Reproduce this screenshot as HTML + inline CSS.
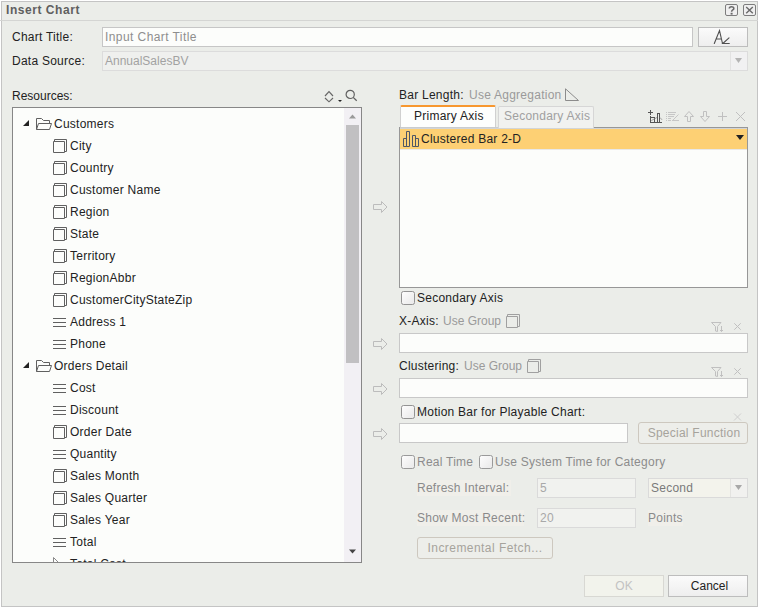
<!DOCTYPE html>
<html><head><meta charset="utf-8">
<style>
*{box-sizing:border-box;margin:0;padding:0}
html,body{width:759px;height:608px;overflow:hidden;background:#fff}
body{position:relative;font-family:"Liberation Sans",sans-serif;font-size:12px;color:#222}
.a{position:absolute}
.t{position:absolute;white-space:nowrap;line-height:14px;height:14px;letter-spacing:0.25px}
.g{color:#9a9a9a}
.box{position:absolute;border:1px solid #c8c8c8;background:#fcfdfb}
.dis{position:absolute;border:1px solid #dcdcdc;background:#eff0ee}
.btn{position:absolute;border:1px solid #bdbdbd;background:linear-gradient(#fbfbfb,#eeeeee);text-align:center;line-height:19px}
.cb{position:absolute;width:14px;height:14px;border:1px solid #939393;border-radius:2.5px;background:linear-gradient(135deg,#fdfdfd,#e9e9e9)}
svg{position:absolute;overflow:visible}
.dbtn{color:#a6a39c;background:#edeeea;border-color:#cdc8bf;border-radius:3px;line-height:20px}
.lb{height:16px;line-height:16px;background:#f0efea;color:#8a8a8a}
</style></head>
<body>
<!-- dialog frame -->
<div class="a" style="left:1px;top:1px;width:757px;height:606px;background:#ebede9;border:1px solid #c4c4c4"></div>
<div class="a" style="left:0;top:20px;width:758px;height:1px;background:#d4d5d3"></div>
<div class="t" style="left:6px;top:3px;font-weight:bold;color:#5f5f5f;font-size:12px;letter-spacing:0.55px">Insert Chart</div>

<!-- help/close -->
<div class="a" style="left:725px;top:4px;width:13px;height:12px;border:1px solid #7d7d7d;border-radius:2px;background:#efefef"></div>
<svg style="left:725px;top:4px" width="13" height="12"><path d="M4.3 4.6 C4.3 2.2 8.8 2.2 8.8 4.4 C8.8 6 6.6 6 6.6 7.8" stroke="#6a6a6a" stroke-width="1.6" fill="none"/><rect x="5.6" y="8.8" width="2" height="1.8" fill="#6a6a6a"/></svg>
<div class="a" style="left:743px;top:4px;width:13px;height:12px;border:1px solid #7d7d7d;border-radius:2px;background:#efefef"></div>
<svg style="left:743px;top:4px" width="13" height="12"><path d="M3.2 3 L9.8 9.2 M9.8 3 L3.2 9.2" stroke="#6a6a6a" stroke-width="1.4"/></svg>

<!-- Chart title -->
<div class="t" style="left:12px;top:30px">Chart Title:</div>
<div class="box" style="left:102px;top:27px;width:591px;height:20px;border-color:#c6c6c6"></div>
<div class="t g" style="left:105px;top:30px;letter-spacing:0.42px;color:#8e8e8e">Input Chart Title</div>
<div class="btn" style="left:698px;top:27px;width:50px;height:20px"></div>
<svg style="left:698px;top:27px" width="50" height="20"><path d="M16.3 16.5 L21.5 3.6 L24.5 16.5 M18 12 H23.3 M31 10.8 L24.8 16.5 H31.3" stroke="#505050" stroke-width="1.1" fill="none" stroke-linecap="round"/></svg>

<!-- Data Source -->
<div class="t" style="left:12px;top:54px">Data Source:</div>
<div class="dis" style="left:102px;top:51px;width:646px;height:20px"></div>
<div class="a" style="left:730px;top:52px;width:1px;height:18px;background:#e2e2e2"></div>
<div class="t g" style="left:105px;top:54px;color:#a2a2a2;letter-spacing:0">AnnualSalesBV</div>
<div class="a" style="left:731px;top:52px;width:16px;height:18px;background:#f1f1f2"></div><svg style="left:735px;top:58px" width="8" height="6"><path d="M0 0 L7 0 L3.5 5 Z" fill="#b4b4b4"/></svg>

<!-- Resources -->
<div class="t" style="left:12px;top:89px;letter-spacing:0">Resources:</div>
<svg style="left:324px;top:91px" width="20" height="12"><path d="M1 5 L5 0.6 L9 5 M1 7 L5 10.8 L9 7" stroke="#666" stroke-width="1.15" fill="none"/><path d="M14 9 L18 9 L16 11 Z" fill="#222"/></svg>
<svg style="left:345px;top:89px" width="14" height="14"><circle cx="5.2" cy="5.4" r="4.1" stroke="#606060" stroke-width="1.2" fill="none"/><path d="M8.2 8.4 L11.7 11.8" stroke="#606060" stroke-width="1.3"/></svg>

<div class="box" style="left:12px;top:107px;width:350px;height:456px;border-color:#878787;background:#fcfdfb"></div>
<div class="a" style="left:344px;top:108px;width:17px;height:454px;background:#f2f0f4"></div>
<div class="a" style="left:346px;top:125px;width:13px;height:238px;background:#c1c0c2"></div>
<svg style="left:349px;top:114px" width="8" height="5"><path d="M0 4.5 L7 4.5 L3.5 0.5Z" fill="#9a9a9a"/></svg>
<svg style="left:349px;top:549px" width="8" height="5"><path d="M0 0.5 L7 0.5 L3.5 4.5Z" fill="#444"/></svg>

<div class="a" style="left:13px;top:108px;width:331px;height:454px;overflow:hidden">
<svg style="left:10px;top:12px" width="7" height="6"><path d="M0 6 L6 6 L6 0 Z" fill="#222"/></svg>
<svg style="left:22px;top:9px" width="18" height="14"><path d="M1.5 12.5 V1.5 H6.5 L8.5 3.5 H14.5 V6.5 M1.5 12.5 L3.5 6.5 H16.5 L14.5 12.5 Z" stroke="#606060" fill="none"/></svg>
<div class="t" style="left:41px;top:9px">Customers</div>
<svg style="left:40px;top:31px" width="14" height="14"><path d="M0.5 2.5 H11.5 V13.5 H0.5 Z M1.5 2.5 V0.5 H13.5 V12.5 H11.5" stroke="#606060" fill="none"/></svg>
<div class="t" style="left:57px;top:31px">City</div>
<svg style="left:40px;top:53px" width="14" height="14"><path d="M0.5 2.5 H11.5 V13.5 H0.5 Z M1.5 2.5 V0.5 H13.5 V12.5 H11.5" stroke="#606060" fill="none"/></svg>
<div class="t" style="left:57px;top:53px">Country</div>
<svg style="left:40px;top:75px" width="14" height="14"><path d="M0.5 2.5 H11.5 V13.5 H0.5 Z M1.5 2.5 V0.5 H13.5 V12.5 H11.5" stroke="#606060" fill="none"/></svg>
<div class="t" style="left:57px;top:75px">Customer Name</div>
<svg style="left:40px;top:97px" width="14" height="14"><path d="M0.5 2.5 H11.5 V13.5 H0.5 Z M1.5 2.5 V0.5 H13.5 V12.5 H11.5" stroke="#606060" fill="none"/></svg>
<div class="t" style="left:57px;top:97px">Region</div>
<svg style="left:40px;top:119px" width="14" height="14"><path d="M0.5 2.5 H11.5 V13.5 H0.5 Z M1.5 2.5 V0.5 H13.5 V12.5 H11.5" stroke="#606060" fill="none"/></svg>
<div class="t" style="left:57px;top:119px">State</div>
<svg style="left:40px;top:141px" width="14" height="14"><path d="M0.5 2.5 H11.5 V13.5 H0.5 Z M1.5 2.5 V0.5 H13.5 V12.5 H11.5" stroke="#606060" fill="none"/></svg>
<div class="t" style="left:57px;top:141px">Territory</div>
<svg style="left:40px;top:163px" width="14" height="14"><path d="M0.5 2.5 H11.5 V13.5 H0.5 Z M1.5 2.5 V0.5 H13.5 V12.5 H11.5" stroke="#606060" fill="none"/></svg>
<div class="t" style="left:57px;top:163px">RegionAbbr</div>
<svg style="left:40px;top:185px" width="14" height="14"><path d="M0.5 2.5 H11.5 V13.5 H0.5 Z M1.5 2.5 V0.5 H13.5 V12.5 H11.5" stroke="#606060" fill="none"/></svg>
<div class="t" style="left:57px;top:185px">CustomerCityStateZip</div>
<svg style="left:40px;top:210px" width="14" height="10"><path d="M0 0.5 H13 M0 4.5 H13 M0 8.5 H13" stroke="#606060" fill="none"/></svg>
<div class="t" style="left:57px;top:207px">Address 1</div>
<svg style="left:40px;top:232px" width="14" height="10"><path d="M0 0.5 H13 M0 4.5 H13 M0 8.5 H13" stroke="#606060" fill="none"/></svg>
<div class="t" style="left:57px;top:229px">Phone</div>
<svg style="left:10px;top:254px" width="7" height="6"><path d="M0 6 L6 6 L6 0 Z" fill="#222"/></svg>
<svg style="left:22px;top:251px" width="18" height="14"><path d="M1.5 12.5 V1.5 H6.5 L8.5 3.5 H14.5 V6.5 M1.5 12.5 L3.5 6.5 H16.5 L14.5 12.5 Z" stroke="#606060" fill="none"/></svg>
<div class="t" style="left:41px;top:251px">Orders Detail</div>
<svg style="left:40px;top:276px" width="14" height="10"><path d="M0 0.5 H13 M0 4.5 H13 M0 8.5 H13" stroke="#606060" fill="none"/></svg>
<div class="t" style="left:57px;top:273px">Cost</div>
<svg style="left:40px;top:298px" width="14" height="10"><path d="M0 0.5 H13 M0 4.5 H13 M0 8.5 H13" stroke="#606060" fill="none"/></svg>
<div class="t" style="left:57px;top:295px">Discount</div>
<svg style="left:40px;top:317px" width="14" height="14"><path d="M0.5 2.5 H11.5 V13.5 H0.5 Z M1.5 2.5 V0.5 H13.5 V12.5 H11.5" stroke="#606060" fill="none"/></svg>
<div class="t" style="left:57px;top:317px">Order Date</div>
<svg style="left:40px;top:342px" width="14" height="10"><path d="M0 0.5 H13 M0 4.5 H13 M0 8.5 H13" stroke="#606060" fill="none"/></svg>
<div class="t" style="left:57px;top:339px">Quantity</div>
<svg style="left:40px;top:361px" width="14" height="14"><path d="M0.5 2.5 H11.5 V13.5 H0.5 Z M1.5 2.5 V0.5 H13.5 V12.5 H11.5" stroke="#606060" fill="none"/></svg>
<div class="t" style="left:57px;top:361px">Sales Month</div>
<svg style="left:40px;top:383px" width="14" height="14"><path d="M0.5 2.5 H11.5 V13.5 H0.5 Z M1.5 2.5 V0.5 H13.5 V12.5 H11.5" stroke="#606060" fill="none"/></svg>
<div class="t" style="left:57px;top:383px">Sales Quarter</div>
<svg style="left:40px;top:405px" width="14" height="14"><path d="M0.5 2.5 H11.5 V13.5 H0.5 Z M1.5 2.5 V0.5 H13.5 V12.5 H11.5" stroke="#606060" fill="none"/></svg>
<div class="t" style="left:57px;top:405px">Sales Year</div>
<svg style="left:40px;top:430px" width="14" height="10"><path d="M0 0.5 H13 M0 4.5 H13 M0 8.5 H13" stroke="#606060" fill="none"/></svg>
<div class="t" style="left:57px;top:427px">Total</div>
<svg style="left:40px;top:449px" width="14" height="14"><path d="M0.5 0.5 L8 8 L0.5 8 Z" stroke="#888" fill="none"/></svg>
<div class="t" style="left:57px;top:449px">Total Cost</div>
</div>

<!-- right side -->
<div class="t" style="left:399px;top:88px">Bar Length:</div>
<div class="t g" style="left:469px;top:88px">Use Aggregation</div>
<svg style="left:565px;top:88px" width="16" height="14"><path d="M0.5 0.8 L0.5 12.5 L13.5 12.5 Z" stroke="#8c8c8c" fill="none"/></svg>

<!-- tabs -->
<div class="box" style="left:399px;top:127px;width:349px;height:161px;border-color:#979797"></div>
<div class="a" style="left:400px;top:127px;width:194px;height:1px;background:#c9ccd0"></div>
<div class="a" style="left:498px;top:106px;width:96px;height:22px;border:1px solid #d6d6d6;border-bottom:none;border-radius:2px 2px 0 0;background:#f1f2f0"></div>
<div class="t g" style="left:504px;top:109px;color:#a0a0a0">Secondary Axis</div>
<div class="a" style="left:400px;top:105px;width:96px;height:22px;background:#fdfefd;border:1px solid #d0d0d0;border-top:2px solid #f7972f;border-bottom:none;border-radius:2px 2px 0 0"></div>
<div class="t" style="left:414px;top:109px">Primary Axis</div>
<div class="a" style="left:400px;top:128px;width:347px;height:22px;background:#fdd074;border-top:1px solid #d3d5d6;border-bottom:1px solid #e8e8e8"></div>
<div class="t" style="left:421px;top:132px">Clustered Bar 2-D</div>
<svg style="left:402px;top:130px" width="18" height="18"><path d="M1.5 16.5 V8.5 H4.5 V16.5 Z M4.5 16.5 V1.5 H7.5 V16.5 Z M10.5 16.5 V5.5 H13.5 V16.5 Z M13.5 16.5 V8.5 H16.5 V16.5 Z" stroke="#4e5666" fill="none"/></svg>
<svg style="left:736px;top:135px" width="9" height="6"><path d="M0 0 L8 0 L4 5 Z" fill="#222"/></svg>

<!-- toolbar icons -->
<svg style="left:644px;top:106px" width="110" height="20">
<g stroke="#555" fill="none" shape-rendering="crispEdges">
<path d="M4 6.5 H9 M6.5 4 V9 M6.5 10 V17 M6 16.5 H18 M6.5 11.5 H10.5 V16.5 M13.5 16.5 V7.5 H15.5 V16.5"/>
</g>
<path d="M7.3 14.6 L13 11.5 M16 11.5 L18 13.8" stroke="#8a8a8a" stroke-width="0.8" fill="none"/>
<g stroke="#c6c6c6" fill="none" shape-rendering="crispEdges">
<path d="M22 6.5 H23 M22 8.5 H23 M22 10.5 H23 M22 12.5 H23 M22 14.5 H23 M24 6.5 H32 M24 8.5 H31 M24 10.5 H30 M24 12.5 H27 M24 14.5 H27 M28 14.5 H35"/>
</g>
<path d="M34.5 8.5 L28.5 14.5" stroke="#c6c6c6" fill="none"/>
<g stroke="#c0c0c0" fill="none">
<path d="M43.5 15.5 V10.5 H40.5 L45 5.5 L49.5 10.5 H46.5 V15.5 Z"/>
<path d="M59.5 5.5 V10.5 H56.5 L61 15.5 L65.5 10.5 H62.5 V5.5 Z"/>
<path d="M78.5 6 V15 M74 10.5 H83" shape-rendering="crispEdges"/>
<path d="M92 6 L101 15 M101 6 L92 15"/>
</g></svg>

<!-- arrows -->
<svg style="left:372px;top:201px" width="18" height="12"><path d="M1.5 3.5 H9.5 V0.5 L15 6 L9.5 11.5 V8.5 H1.5 Z" stroke="#bcbcbc" fill="none"/></svg>
<svg style="left:372px;top:338px" width="18" height="12"><path d="M1.5 3.5 H9.5 V0.5 L15 6 L9.5 11.5 V8.5 H1.5 Z" stroke="#bcbcbc" fill="none"/></svg>
<svg style="left:372px;top:383px" width="18" height="12"><path d="M1.5 3.5 H9.5 V0.5 L15 6 L9.5 11.5 V8.5 H1.5 Z" stroke="#bcbcbc" fill="none"/></svg>
<svg style="left:372px;top:428px" width="18" height="12"><path d="M1.5 3.5 H9.5 V0.5 L15 6 L9.5 11.5 V8.5 H1.5 Z" stroke="#bcbcbc" fill="none"/></svg>

<div class="cb" style="left:401px;top:291px"></div>
<div class="t" style="left:417px;top:291px">Secondary Axis</div>

<div class="t" style="left:399px;top:314px">X-Axis:</div>
<div class="t g" style="left:443px;top:314px;letter-spacing:0">Use Group</div>
<svg style="left:506px;top:314px" width="15" height="14"><path d="M0.5 2.5 H11.5 V13.5 H0.5 Z M1.5 2.5 V0.5 H13.5 V12.5 H11.5" stroke="#a0a0a0" fill="none"/></svg>
<svg style="left:710px;top:319px" width="32" height="14"><g stroke="#c0c0c0" fill="none"><path d="M1.5 3.5 H11 L7.5 7.5 V12.5 L5.5 12 V7.5 Z M11.5 7 V12.5 M10 11 L11.5 12.5 L13 11"/><path d="M24.3 4.3 L30.7 10.7 M30.7 4.3 L24.3 10.7"/></g></svg>
<div class="box" style="left:399px;top:333px;width:349px;height:20px"></div>

<div class="t" style="left:399px;top:359px">Clustering:</div>
<div class="t g" style="left:464px;top:359px;letter-spacing:0">Use Group</div>
<svg style="left:527px;top:359px" width="15" height="14"><path d="M0.5 2.5 H11.5 V13.5 H0.5 Z M1.5 2.5 V0.5 H13.5 V12.5 H11.5" stroke="#a0a0a0" fill="none"/></svg>
<svg style="left:710px;top:364px" width="32" height="14"><g stroke="#c0c0c0" fill="none"><path d="M1.5 3.5 H11 L7.5 7.5 V12.5 L5.5 12 V7.5 Z M11.5 7 V12.5 M10 11 L11.5 12.5 L13 11"/><path d="M24.3 4.3 L30.7 10.7 M30.7 4.3 L24.3 10.7"/></g></svg>
<div class="box" style="left:399px;top:378px;width:349px;height:20px"></div>

<div class="cb" style="left:401px;top:405px"></div>
<div class="t" style="left:417px;top:405px">Motion Bar for Playable Chart:</div>
<svg style="left:733px;top:413px" width="10" height="8"><path d="M1 0.5 L8 7.5 M8 0.5 L1 7.5" stroke="#cfcfcf" fill="none"/></svg>
<div class="box" style="left:399px;top:423px;width:229px;height:20px"></div>
<div class="btn dbtn" style="left:638px;top:422px;width:110px;height:22px;letter-spacing:0.25px;padding-left:2px">Special Function</div>

<div class="cb" style="left:401px;top:455px;border-color:#9a9a9a"></div>
<div class="t g" style="left:417px;top:455px;color:#8c8c8c">Real Time</div>
<div class="cb" style="left:479px;top:455px;border-color:#9a9a9a"></div>
<div class="t g" style="left:495px;top:455px;color:#8c8c8c">Use System Time for Category</div>

<div class="t lb" style="left:417px;top:480px;width:94px">Refresh Interval:</div>
<div class="dis" style="left:537px;top:478px;width:99px;height:20px;border-color:#dadada;background:#f1f2ef"></div>
<div class="t g" style="left:540px;top:481px;color:#a8a8a8">5</div>
<div class="dis" style="left:648px;top:478px;width:100px;height:20px;border-color:#dadada;background:#f3f3ec"></div>
<div class="a" style="left:730px;top:479px;width:1px;height:18px;background:#e3e3e0"></div>
<div class="a" style="left:731px;top:479px;width:16px;height:18px;background:#f1f1ef"></div>
<div class="t g" style="left:651px;top:481px;color:#7a7a7a">Second</div>
<svg style="left:735px;top:485px" width="8" height="6"><path d="M0 0 L7 0 L3.5 5 Z" fill="#a8a8a8"/></svg>

<div class="t lb" style="left:417px;top:510px;width:107px">Show Most Recent:</div>
<div class="dis" style="left:537px;top:508px;width:99px;height:20px;border-color:#dadada;background:#f1f2ef"></div>
<div class="t g" style="left:540px;top:511px;color:#a8a8a8">20</div>
<div class="t lb" style="left:648px;top:510px;width:35px">Points</div>

<div class="btn dbtn" style="left:417px;top:537px;width:136px;height:22px;letter-spacing:0.45px">Incremental Fetch...</div>

<div class="btn" style="left:584px;top:575px;width:80px;height:22px;color:#c2c2c2;line-height:20px;border-color:#d8d8d3;background:#f2f3ec">OK</div>
<div class="btn" style="left:668px;top:575px;width:80px;height:22px;color:#222;line-height:20px;padding-left:3px">Cancel</div>

</body></html>
